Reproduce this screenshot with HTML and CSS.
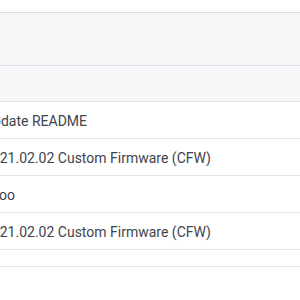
FILE: index.html
```html
<!DOCTYPE html>
<html lang="en">
<head>
    <meta charset="UTF-8">
    <meta name="viewport" content="width=device-width, initial-scale=1.0">
    <title>Commits</title>
    <link rel="stylesheet" href="styles.css">
</head>
<body>
    <div class="top"></div>
    <div class="head"></div>
    <div class="subhead"></div>
    <ul class="commits">
        <li class="commit"><span class="msg">Update README</span></li>
        <li class="commit"><span class="msg">2021.02.02 Custom Firmware (CFW)</span></li>
        <li class="commit"><span class="msg">Igloo</span></li>
        <li class="commit"><span class="msg">2021.02.02 Custom Firmware (CFW)</span></li>
        <li class="commit spacer"></li>
    </ul>
</body>
</html>
```

FILE: styles.css
```css
body { margin: 0; overflow: hidden; background: #fff; font-family: Roboto, "Liberation Sans", sans-serif; }
.top { height: 12px; }
.head {
    height: 52px;
    background-color: #f6f7f9;
    border-top: 1px solid #dcdee6;
    border-bottom: 1px solid #dcdee6;
}
.subhead { height: 35px; background-color: #f6f7f9; }
.commits { list-style: none; margin: 0; padding: 0; }
.commit {
    height: 36px;
    border-top: 1px solid #e2e4eb;
    display: flex;
    align-items: center;
    font-size: 14px;
    color: #41444c;
    white-space: nowrap;
}
.commit .msg { margin-left: -16px; padding-top: 1px; }
.commit.spacer { height: 16px; border-bottom: 1px solid #e2e4eb; }
```
